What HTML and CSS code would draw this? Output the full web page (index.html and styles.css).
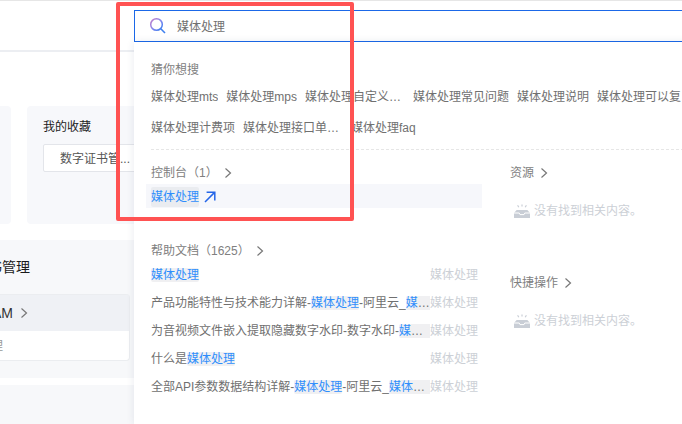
FILE: index.html
```html
<!DOCTYPE html>
<html lang="zh-CN">
<head>
  <meta charset="UTF-8" />
  <title>搜索 - 媒体处理</title>
  <link rel="stylesheet" href="styles.css">
</head>
<body>

<div class="page">
  <aside class="side">
    <div class="side-head"></div>
    <div class="cards">
      <div class="card card-first"></div>
      <div class="card">
        <div class="card-title">我的收藏</div>
        <div class="fav-box">数字证书管...</div>
      </div>
    </div>
    <section class="manage">
      <div class="manage-title"><span>证书管理</span></div>
      <div class="manage-box">
        <div class="manage-box-head">
          <span>RAM</span>
          <svg class="chev" viewBox="0 0 8 12"><path d="M1.5 1.5 6.5 6l-5 4.5" /></svg>
        </div>
        <div class="manage-box-body"><span>访问管理</span></div>
      </div>
    </section>
    <div class="side-foot"></div>
  </aside>

  <main class="panel">
    <div class="search">
      <svg class="search-icon" viewBox="0 0 18 18">
        <defs>
          <linearGradient id="lens" x1="0" y1="0" x2="1" y2="1">
            <stop offset="0" stop-color="#c77fc8" />
            <stop offset="0.55" stop-color="#7f86ee" />
            <stop offset="1" stop-color="#2f7df0" />
          </linearGradient>
        </defs>
        <circle cx="7.5" cy="7.5" r="5.8" fill="none" stroke="url(#lens)" stroke-width="1.5" />
        <path d="M11.8 11.8 16 16" stroke="#3f80ee" stroke-width="1.6" />
      </svg>
      <span class="search-text">媒体处理</span>
    </div>

    <div class="results">
      <div class="guess">
        <div class="label">猜你想搜</div>
        <div class="guess-row">
          <span class="guess-item">媒体处理mts</span>
          <span class="guess-item">媒体处理mps</span>
          <span class="guess-item">媒体处理自定义转码模板</span>
          <span class="guess-item">媒体处理常见问题</span>
          <span class="guess-item">媒体处理说明</span>
          <span class="guess-item">媒体处理可以复制吗</span>
        </div>
        <div class="guess-row">
          <span class="guess-item">媒体处理计费项</span>
          <span class="guess-item">媒体处理接口单价说明</span>
          <span class="guess-item">媒体处理faq</span>
        </div>
      </div>

      <div class="columns">
        <div class="col-main">
          <div class="label label-link">控制台（1）
            <svg class="chev" viewBox="0 0 8 12"><path d="M1.5 1.5 6.5 6l-5 4.5" /></svg>
          </div>
          <div class="console-item">
            <mark>媒体处理</mark>
            <svg class="jump" viewBox="0 0 12 12"><path d="M1 11 10.6 1.4M2.6 1.2h8.2v8.2" /></svg>
          </div>

          <div class="label label-link help-label">帮助文档（1625）
            <svg class="chev" viewBox="0 0 8 12"><path d="M1.5 1.5 6.5 6l-5 4.5" /></svg>
          </div>
          <div class="doc">
            <div class="doc-title"><mark>媒体处理</mark></div>
            <div class="doc-tag">媒体处理</div>
          </div>
          <div class="doc">
            <div class="doc-title">产品功能特性与技术能力详解-<mark>媒体处理</mark>-阿里云_<mark>媒体处理</mark></div>
            <div class="doc-tag">媒体处理</div>
          </div>
          <div class="doc">
            <div class="doc-title">为音视频文件嵌入提取隐藏数字水印-数字水印-<mark>媒体处理</mark></div>
            <div class="doc-tag">媒体处理</div>
          </div>
          <div class="doc">
            <div class="doc-title">什么是<mark>媒体处理</mark></div>
            <div class="doc-tag">媒体处理</div>
          </div>
          <div class="doc">
            <div class="doc-title">全部API参数数据结构详解-<mark>媒体处理</mark>-阿里云_<mark>媒体处理</mark></div>
            <div class="doc-tag">媒体处理</div>
          </div>
        </div>

        <div class="col-side">
          <div class="label label-link">资源
            <svg class="chev" viewBox="0 0 8 12"><path d="M1.5 1.5 6.5 6l-5 4.5" /></svg>
          </div>
          <div class="empty">
            <svg class="empty-icon" viewBox="0 0 16 14">
              <path d="M2.6 6h10.8L16 9v5H0V9z" />
              <path class="empty-cut" d="M0 9h5.2l.8 1.6h4l.8-1.6H16" />
              <path class="empty-rays" d="M8 .4v2.2M3.6 1.2l1.2 2M12.4 1.2l-1.2 2" />
            </svg>
            <span>没有找到相关内容。</span>
          </div>
          <div class="label label-link quick-label">快捷操作
            <svg class="chev" viewBox="0 0 8 12"><path d="M1.5 1.5 6.5 6l-5 4.5" /></svg>
          </div>
          <div class="empty">
            <svg class="empty-icon" viewBox="0 0 16 14">
              <path d="M2.6 6h10.8L16 9v5H0V9z" />
              <path class="empty-cut" d="M0 9h5.2l.8 1.6h4l.8-1.6H16" />
              <path class="empty-rays" d="M8 .4v2.2M3.6 1.2l1.2 2M12.4 1.2l-1.2 2" />
            </svg>
            <span>没有找到相关内容。</span>
          </div>
        </div>
      </div>
    </div>
  </main>
</div>

<div class="red-frame"></div>

</body>
</html>
```

FILE: styles.css
```css
html,
body {
  margin: 0;
  padding: 0;
  height: 424px;
  overflow: hidden;
}

body {
  position: relative;
  background: #fff;
  font-family: "Liberation Sans", "Noto Sans CJK SC", sans-serif;
  font-size: 12px;
  line-height: 20px;
  color: #707070;
}

/* mixed latin/cjk text sits 1px high in its line */
.label,
.guess-row,
.card-title,
.search-text,
.empty {
  padding-top: 1px;
  margin-bottom: -1px;
}

.page {
  display: flex;
  height: 423px;
  border-top: 1px solid #e6e6e6;
  overflow: hidden;
}

/* left, behind the search panel */
.side {
  flex: none;
  width: 134px;
  overflow: hidden;
}

.side-head {
  height: 49px;
  border-bottom: 2px solid #eceef2;
}

.cards {
  display: flex;
  gap: 16px;
  margin: 54px 0 0 -120px;
  height: 118px;
}

.card {
  flex: none;
  width: 150px;
  padding: 10px 16px;
  box-sizing: border-box;
  background: #f7f8fb;
  border-radius: 4px;
}

.card-first {
  width: 131px;
}

.card-title {
  color: #222;
}

.fav-box {
  width: 110px;
  height: 28px;
  margin-top: 8px;
  padding-left: 16px;
  box-sizing: border-box;
  line-height: 28px;
  background: #fff;
  border: 1px solid #e3e5ea;
  border-radius: 2px;
  color: #555;
  white-space: nowrap;
}

.manage {
  height: 138px;
  margin-top: 16px;
  background: #f7f8fa;
  overflow: hidden;
}

.manage-title {
  display: flex;
  justify-content: flex-end;
  margin-top: 17px;
  padding-right: 104px;
  font-size: 14px;
  color: #1a1a1a;
  white-space: nowrap;
}

.manage-box {
  height: 67px;
  width: 130px;
  margin-top: 17px;
  box-sizing: border-box;
  background: #fff;
  border: 1px solid #ebedf0;
  border-left: none;
  border-radius: 0 4px 4px 0;
}

.manage-box-head {
  display: flex;
  justify-content: flex-end;
  align-items: center;
  gap: 7px;
  height: 36px;
  padding-right: 117px;
  background: #eff1f5;
  font-size: 14px;
  color: #333;
  white-space: nowrap;
}

.manage-box-head .chev {
  flex: none;
  margin-right: -16px;
}

.manage-box-body {
  display: flex;
  justify-content: flex-end;
  height: 30px;
  padding-right: 126px;
  line-height: 30px;
  color: #999;
  white-space: nowrap;
}

.side-foot {
  height: 40px;
  margin-top: 7px;
  background: #f7f8fa;
}

/* search panel */
.panel {
  flex: none;
  width: 570px;
}

.search {
  display: flex;
  align-items: center;
  height: 32px;
  margin-top: 9px;
  padding-left: 14px;
  box-sizing: border-box;
  border: 1px solid #1b68e8;
}

.search-icon {
  flex: none;
  width: 18px;
  height: 18px;
}

.search-text {
  margin-left: 10px;
}

.results {
  height: 382px;
  padding: 17px 0 0 17px;
  box-sizing: border-box;
  background: #fff;
  box-shadow: 0 0 8px rgba(30, 50, 90, 0.1);
}

.label {
  color: #808080;
}

.label-link {
  display: flex;
  align-items: center;
  gap: 6px;
}

.guess {
  padding-bottom: 12px;
  border-bottom: 1px dashed #e6e6e6;
}

.guess-row {
  display: flex;
  gap: 8px;
  margin-top: 7px;
  white-space: nowrap;
}

.guess-row + .guess-row {
  margin-top: 11px;
}

.guess-item {
  flex: none;
  max-width: 100px;
  overflow: hidden;
  text-overflow: ellipsis;
}

.columns {
  display: flex;
  margin-top: 12px;
}

.col-main {
  flex: none;
  width: 327px;
  margin-right: 32px;
}

.col-side {
  flex: none;
}

.chev {
  flex: none;
  width: 8px;
  height: 12px;
}

.chev path {
  fill: none;
  stroke: #777;
  stroke-width: 1.2;
}

mark {
  background: #f0f0f2;
  color: #2f8efc;
  border-radius: 2px;
}

.console-item {
  display: flex;
  align-items: center;
  gap: 5px;
  height: 24px;
  margin: 2px -4px 0 -5px;
  padding: 2px 0 0 5px;
  box-sizing: border-box;
  background: #f6f7fb;
}

.console-item mark {
  background: #eaecf0;
}

.jump {
  width: 12px;
  height: 12px;
}

.jump path {
  fill: none;
  stroke: #2566e8;
  stroke-width: 1.5;
}

.help-label {
  margin-top: 32px;
}

.doc {
  display: flex;
  align-items: center;
  height: 28px;
  padding-top: 2px;
  box-sizing: border-box;
}

.doc-title {
  flex: none;
  width: 279px;
  overflow: hidden;
  white-space: nowrap;
  text-overflow: ellipsis;
}

.doc-tag {
  flex: none;
  width: 48px;
  color: #ccd0d6;
}

.empty {
  display: flex;
  align-items: center;
  gap: 4px;
  margin-top: 18px;
  margin-left: 4px;
  color: #ccd0d6;
}

.empty-icon {
  flex: none;
  width: 16px;
  height: 14px;
}

.empty-icon path {
  fill: #c9ced6;
}

.empty-icon .empty-cut {
  fill: none;
  stroke: #fff;
  stroke-width: 1;
}

.empty-icon .empty-rays {
  fill: none;
  stroke: #c9ced6;
  stroke-width: 1.2;
}

.quick-label {
  margin-top: 52px;
}

/* annotation drawn over the screenshot */
.red-frame {
  position: absolute;
  left: 116px;
  top: 2px;
  width: 238px;
  height: 219px;
  box-sizing: border-box;
  border: 4px solid #ff5252;
  border-radius: 2px;
}
```
